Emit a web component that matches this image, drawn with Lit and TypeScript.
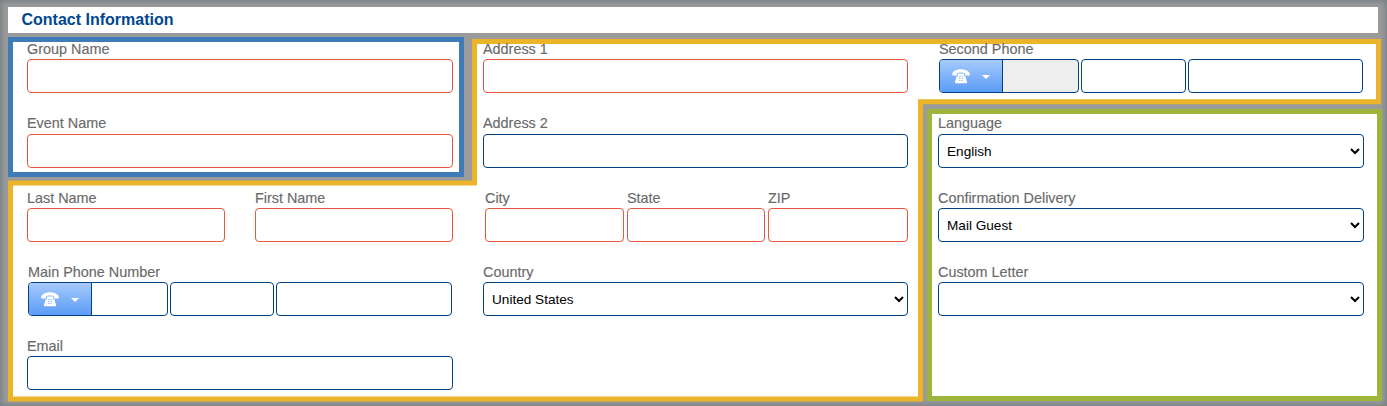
import { LitElement, html, css, svg } from "lit";
import { customElement } from "lit/decorators.js";

const phoneIcon = html`<svg class="phone" viewBox="0 0 18 15" width="18" height="15" aria-hidden="true">
  <path fill="#fff" d="M0.2 5.6C0.2 2.4 4 0.3 9 0.3s8.8 2.1 8.8 5.3c0 .6-.2 1-.7 1h-3.4c-.5 0-.7-.3-.7-.8V4.6c0-.5-1.8-1-4-1s-4 .5-4 1v1.2c0 .5-.2.8-.7.8H.9c-.5 0-.7-.4-.7-1z"/>
  <path fill="#fff" d="M6 4.6h6v1.3c0 .8.5 1.3 1.3 1.4l1.7 5.4c.2 1-.3 1.6-1.2 1.6H4.2c-.9 0-1.4-.6-1.2-1.6l1.7-5.4C5.500 7.200 6 6.700 6 5.900z"/>
  <g fill="#9cc2f7">
    <rect x="7" y="7" width="1" height="1"/><rect x="8.500" y="7" width="1" height="1"/><rect x="10" y="7" width="1" height="1"/>
    <rect x="7" y="9" width="1" height="1"/><rect x="8.500" y="9" width="1" height="1"/><rect x="10" y="9" width="1" height="1"/>
    <rect x="7" y="11" width="1" height="1"/><rect x="8.500" y="11" width="1" height="1"/><rect x="10" y="11" width="1" height="1"/>
  </g>
</svg>`;

const outline = svg`<path d="M10.500 183H474.500V41.500H1378.500V101.700H920.500V399H10.500Z" fill="#fff" stroke="#ecb429" stroke-width="5"/>`;

@customElement("app-root")
export class AppRoot extends LitElement {
  static styles = css`
    :host {
      display: block;
      width: 1387px;
      height: 406px;
      font-family: "Liberation Sans", Arial, sans-serif;
    }
    * { box-sizing: border-box; }
    .page {
      position: relative;
      width: 1387px;
      height: 406px;
      overflow: hidden;
      background: #9b9b9b;
      box-shadow: inset 0 0 6px 1px #6f7b80;
      padding: 7px 0 0 8px;
    }
    .outline {
      position: absolute;
      left: 0;
      top: 0;
    }
    .title {
      position: relative;
      width: 1370px;
      height: 26px;
      background: #fff;
      padding: 0 0 0 13.5px;
      margin-bottom: 4px;
      font-size: 16px;
      line-height: 25px;
      font-weight: 700;
      color: #00478f;
    }
    .body {
      position: relative;
      display: grid;
      grid-template-columns: 456px 463px 455px;
      grid-template-rows: 72px 68px 224px;
    }
    .blue {
      grid-column: 1;
      grid-row: 1 / 3;
      background: #fff;
      border: 5px solid #3f7cb7;
      padding: 0 6px 0 14px;
    }
    .mid {
      grid-column: 2;
      grid-row: 1 / 4;
      padding: 5px 19px 0;
    }
    .second {
      grid-column: 3;
      grid-row: 1;
      padding: 5px 19px 0 12px;
    }
    .green {
      grid-column: 3;
      grid-row: 2 / 4;
      background: #fff;
      border: 5px solid #9db43d;
      padding: 3px 13px 0 6px;
    }
    .lower {
      grid-column: 1;
      grid-row: 3;
      padding: 14px 11px 0 19px;
    }
    .stack { display: flex; flex-direction: column; gap: 23px; }
    .stack.first-wide > :first-child { margin-bottom: 1px; }
    .row { display: flex; }
    .names { gap: 30px; }
    .names .field { flex: 1 1 0; min-width: 0; }
    .csz { gap: 3px; margin-left: 2px; }
    .w139 { width: 139px; }
    .w138 { width: 138px; }
    .w140 { width: 140px; }
    label, .label {
      display: block;
      height: 17px;
      font-size: 14.4px;
      line-height: 15px;
      color: #6a6a6a;
      white-space: nowrap;
      -webkit-text-stroke: 0.15px #6a6a6a;
    }
    label.up { height: 18px; margin-top: -1px; }
    .indent { margin-left: 1px; }
    input, select {
      display: block;
      width: 100%;
      height: 34px;
      margin: 0;
      background: #fff;
      border: 1px solid #00417f;
      border-radius: 4px;
      outline: none;
      font-family: inherit;
      font-size: 13.6px;
      color: #000;
    }
    select { padding: 0 4px; }
    input.req { border-color: #e8583f; }
    .phones {
      display: flex;
      gap: 2px;
    }
    .phones.main { margin: 0 1px; }
    .dial {
      display: flex;
      width: 140px;
      flex: none;
      height: 34px;
      border: 1px solid #00417f;
      border-radius: 4px;
      overflow: hidden;
      background: #fff;
    }
    .dial.off { background: #eee; }
    .btn {
      display: flex;
      align-items: center;
      width: 63px;
      flex: none;
      padding: 1px 0 0 12px;
      background: linear-gradient(#a6cafc, #5b9cf6);
      border: 0;
      border-right: 1px solid #00417f;
    }
    .caret {
      width: 0;
      height: 0;
      margin: 1px 0 0 12px;
      border-left: 4px solid transparent;
      border-right: 4px solid transparent;
      border-top: 4px solid #fff;
    }
    .dial input {
      flex: 1;
      min-width: 0;
      height: 32px;
      border: 0;
      border-radius: 0;
      background: transparent;
    }
    .phones input.mid-seg { width: 104px; flex: none; }
    .second .phones input.mid-seg { width: 105px; }
    .phones input.end-seg { flex: 1; width: auto; min-width: 0; }
  `;

  private dial(off: boolean) {
    return html`<div class="dial ${off ? "off" : ""}">
      <button class="btn" type="button" aria-label="Phone type">${phoneIcon}<span class="caret"></span></button>
      <input type="tel" ?disabled=${off} />
    </div>`;
  }

  render() {
    return html`<div class="page">
      <svg class="outline" width="1387" height="406" aria-hidden="true">${outline}</svg>
      <div class="title">Contact Information</div>
      <div class="body">
        <section class="blue stack first-wide">
          <div class="field"><label>Group Name</label><input class="req" /></div>
          <div class="field"><label class="up">Event Name</label><input class="req" /></div>
        </section>
        <section class="mid stack first-wide">
          <div class="field"><label>Address 1</label><input class="req" /></div>
          <div class="field"><label class="up">Address 2</label><input /></div>
          <div class="row csz">
            <div class="field w139"><label>City</label><input class="req" /></div>
            <div class="field w138"><label>State</label><input class="req" /></div>
            <div class="field w140"><label>ZIP</label><input class="req" /></div>
          </div>
          <div class="field"><label>Country</label>
            <select><option>United States</option></select>
          </div>
        </section>
        <section class="second">
          <span class="label">Second Phone</span>
          <div class="phones">
            ${this.dial(true)}
            <input class="mid-seg" />
            <input class="end-seg" />
          </div>
        </section>
        <section class="green stack">
          <div class="field"><label class="up">Language</label>
            <select><option>English</option></select>
          </div>
          <div class="field"><label>Confirmation Delivery</label>
            <select><option>Mail Guest</option></select>
          </div>
          <div class="field"><label>Custom Letter</label>
            <select><option></option></select>
          </div>
        </section>
        <section class="lower stack">
          <div class="row names">
            <div class="field"><label>Last Name</label><input class="req" /></div>
            <div class="field"><label>First Name</label><input class="req" /></div>
          </div>
          <div class="field">
            <span class="label indent">Main Phone Number</span>
            <div class="phones main">
              ${this.dial(false)}
              <input class="mid-seg" />
              <input class="end-seg" />
            </div>
          </div>
          <div class="field"><label>Email</label><input /></div>
        </section>
      </div>
    </div>`;
  }
}
